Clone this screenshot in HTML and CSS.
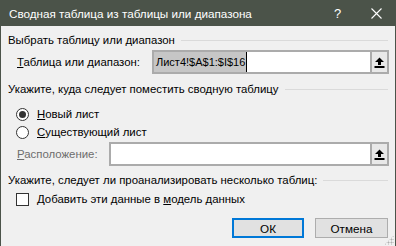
FILE: index.html
```html
<!DOCTYPE html>
<html lang="ru">
<head>
<meta charset="utf-8">
<link rel="stylesheet" href="styles.css">
</head>
<body>
<div class="window">
  <div class="titlebar">
    <span class="title">Сводная таблица из таблицы или диапазона</span>
    <span class="help">?</span>
    <svg class="close" width="11" height="11" viewBox="0 0 11 11"><path d="M0.5 0.5 L10.5 10.5 M10.5 0.5 L0.5 10.5" stroke="#fff" stroke-width="1.1" fill="none"/></svg>
  </div>
  <div class="content">
    <div class="heading h1"><span>Выбрать таблицу или диапазон</span><i class="rule"></i></div>
    <div class="field-row r1">
      <span class="label"><u>Т</u>аблица или диапазон:</span>
      <div class="input">
        <span class="value"><span class="sel">Лист4!$A$1:$I$16</span><span class="caret"></span></span>
        <span class="pick"><svg width="11" height="11" viewBox="0 0 11 11"><path d="M5.5 0.5 L10 5 L7 5 L7 8 L4 8 L4 5 L1 5 Z" fill="#000"/><rect x="0.5" y="9" width="10" height="2" fill="#000"/></svg></span>
      </div>
    </div>
    <div class="heading h2"><span>Укажите, куда следует поместить сводную таблицу</span><i class="rule"></i></div>
    <div class="option o1"><span class="radio checked"></span><span><u>Н</u>овый лист</span></div>
    <div class="option o2"><span class="radio"></span><span><u>С</u>уществующий лист</span></div>
    <div class="field-row r2">
      <span class="label disabled"><u>Р</u>асположение:</span>
      <div class="input">
        <span class="value"></span>
        <span class="pick"><svg width="11" height="11" viewBox="0 0 11 11"><path d="M5.5 0.5 L10 5 L7 5 L7 8 L4 8 L4 5 L1 5 Z" fill="#000"/><rect x="0.5" y="9" width="10" height="2" fill="#000"/></svg></span>
      </div>
    </div>
    <div class="heading h3"><span>Укажите, следует ли проанализировать несколько таблиц:</span><i class="rule"></i></div>
    <div class="option o3"><span class="check"></span><span>Добавить эти данные в <u>м</u>одель данных</span></div>
    <div class="buttons">
      <button class="btn primary">ОК</button>
      <button class="btn">Отмена</button>
    </div>
  </div>
  <div class="grip"></div>
</div>
</body>
</html>
```
FILE: styles.css
```css
* { box-sizing: border-box; }
html, body { margin: 0; padding: 0; }
body {
  width: 396px;
  height: 246px;
  overflow: hidden;
  background: #f0f0f0;
  font-family: "Liberation Sans", Arial, sans-serif;
  font-size: 11.4px;
  color: #000;
}
.window {
  position: relative;
  width: 396px;
  height: 246px;
  background: #f0f0f0;
  border-left: 1px solid #4b5349;
  border-right: 1px solid #4b5349;
  display: flex;
  flex-direction: column;
}
.titlebar {
  height: 26px;
  background: #4b5349;
  color: #fff;
  display: flex;
  align-items: center;
  padding-left: 8px;
  font-size: 11.7px;
}
.title { flex: 1; }
.help { width: 8px; margin-right: 29px; font-size: 13px; }
.close { margin-right: 13px; }
.content {
  padding: 6px 6px 0 7px;
  display: flex;
  flex-direction: column;
}
.heading {
  display: flex;
  align-items: center;
  height: 16px;
}
.heading .rule {
  flex: 1;
  height: 1px;
  background: #dadada;
  margin: 0 1px 0 6px;
}
.h2 { margin-top: 7px; }
.h3 { margin-top: 6px; }
.field-row {
  display: flex;
  align-items: center;
  height: 24px;
}
.r1 { margin-top: 2px; }
.r2 { margin-top: 1px; height: 24px; }
.label { padding-left: 9px; }
.r1 .label { width: 144px; }
.r2 .label { width: 101px; }
.label.disabled { color: #6d6d6d; }
.input {
  flex: 1;
  height: 100%;
  display: flex;
  border: 2px solid #ababab;
  background: #fff;
}
.value {
  flex: 1;
  display: flex;
  align-items: stretch;
}
.sel {
  background: #c6c6c6;
  padding: 0 1px 0 2px;
  display: flex;
  align-items: center;
  font-size: 11px;
}
.caret {
  width: 1px;
  background: #000;
}
.pick {
  width: 17px;
  border-left: 2px solid #ababab;
  background: #e8e8e8;
  display: flex;
  align-items: center;
  justify-content: center;
}
.option {
  display: flex;
  align-items: center;
  height: 18px;
  padding-left: 8px;
}
.o1 { margin-top: 8px; }
.o3 { margin-top: 2px; }
.radio {
  width: 13px;
  height: 13px;
  border: 1px solid #333;
  border-radius: 50%;
  background: #fff;
  margin-right: 8px;
  display: flex;
  align-items: center;
  justify-content: center;
}
.radio.checked::after {
  content: "";
  width: 7px;
  height: 7px;
  border-radius: 50%;
  background: #333;
}
.check {
  width: 13px;
  height: 13px;
  border: 1px solid #333;
  background: #fff;
  margin-right: 8px;
}
.buttons {
  display: flex;
  justify-content: flex-end;
  gap: 11px;
  margin-top: 10px;
  margin-right: 1px;
}
.btn {
  width: 73px;
  height: 20px;
  font-family: inherit;
  font-size: 11.7px;
  background: #e1e1e1;
  border: 1px solid #adadad;
  padding: 0;
  color: #000;
}
.btn.primary {
  border: 2px solid #0078d7;
  width: 72px;
}
.grip {
  position: absolute;
  right: 1px;
  bottom: 1px;
  width: 10px;
  height: 10px;
  background:
    radial-gradient(circle, #b0b0b0 0.9px, transparent 1.1px) 0 0 / 3px 3px;
  clip-path: polygon(100% 0, 100% 100%, 0 100%);
}
```
